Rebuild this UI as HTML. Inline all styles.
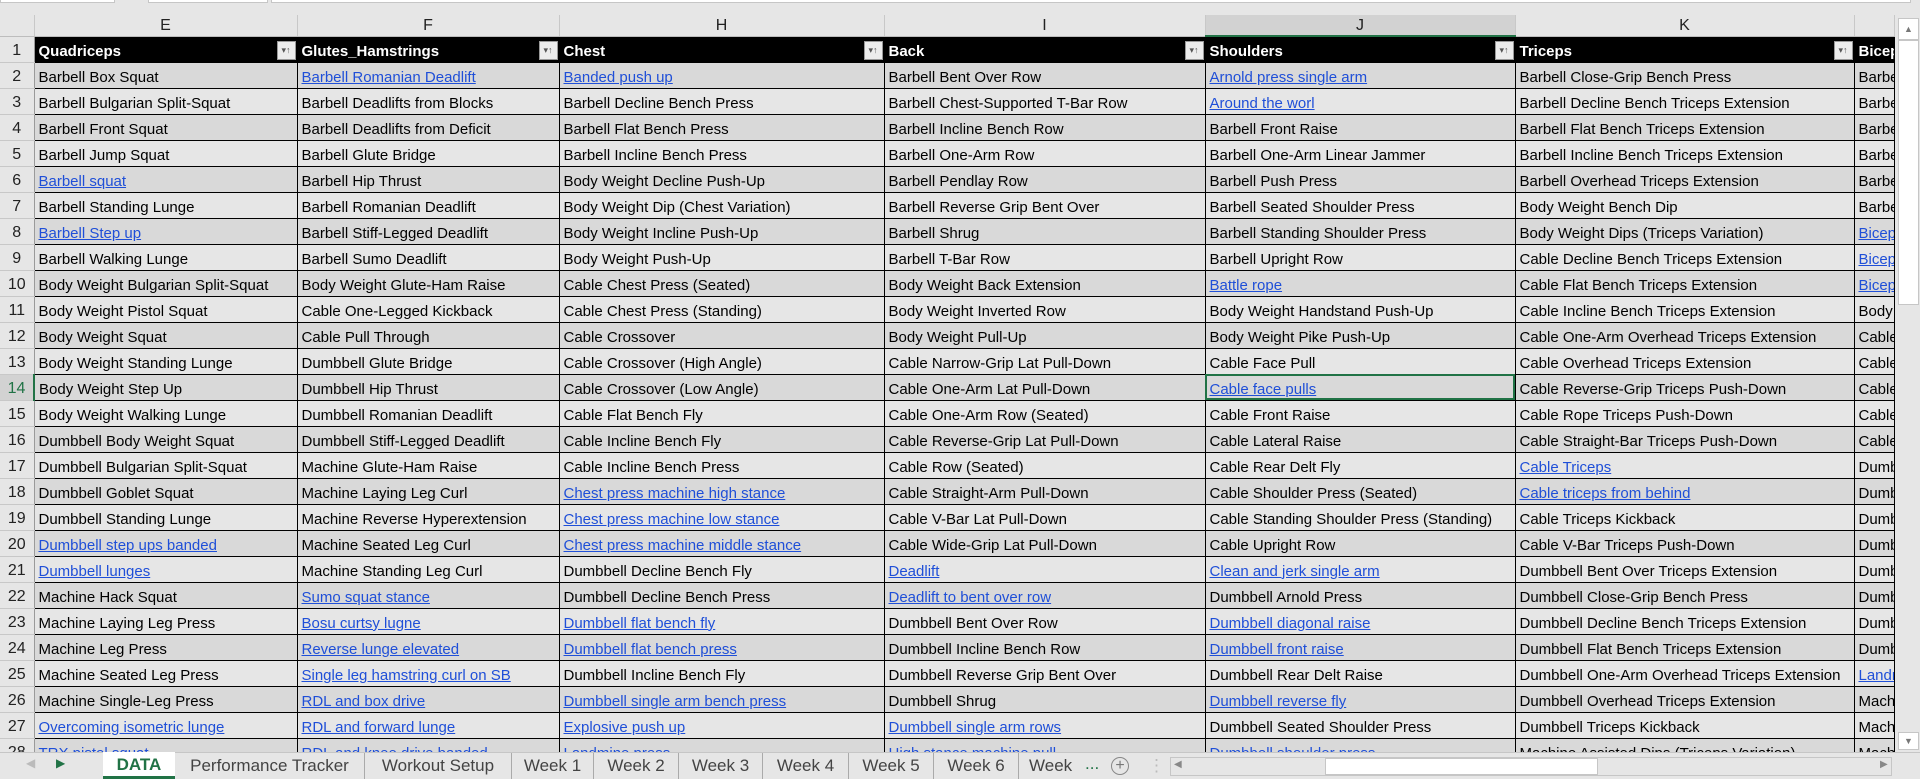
<!DOCTYPE html>
<html><head><meta charset="utf-8"><style>
*{margin:0;padding:0;box-sizing:border-box}
body{width:1920px;height:779px;overflow:hidden;background:#e6e6e6;font-family:"Liberation Sans",Arial,sans-serif;position:relative}
.top{position:absolute;left:0;top:0;width:1920px;height:15px;background:#e6e6e6}
.top div{position:absolute;top:0;height:3px;background:#fff;border:1px solid #c6c6c6;border-top:none}
table{position:absolute;left:0;top:15px;border-collapse:collapse;table-layout:fixed;width:1894px;font-size:15px}
td,th{overflow:hidden;white-space:nowrap;height:26px;border:1px solid #000;padding:4px 0 0 4px;text-align:left;font-weight:normal;color:#000;vertical-align:middle}
tr.ch th{height:21px;background:#e6e6e6;border:none;border-right:1px solid #c8c8c8;border-bottom:1px solid #bdbdbd;text-align:center;font-size:16px;color:#222;padding:2px 0 0 0}
tr.ch th.sel{background:#d2d2d2;border-bottom:2px solid #217346}
th.rn{background:#e6e6e6;border:none;border-right:1px solid #9a9a9a;border-bottom:1px solid #c8c8c8;text-align:center;padding:4px 0 0 0;font-size:16px;color:#222}
th.rn.s{background:#d2d2d2;color:#217346;border-right:2px solid #217346}
tr.h td{background:#000;color:#fff;font-weight:bold;position:relative}
.f{position:absolute;right:1px;top:4px;width:19px;height:19px;background:#ececec;border:1px solid #999;color:#555;font-size:9px;line-height:17px;text-align:center;font-weight:normal}
tr.g td{background:#d9d9d9}
a{color:#1f4fd8;text-decoration:underline}
td.sc{outline:2px solid #217346;outline-offset:-2px}
.vs{position:absolute;left:1897px;top:15px;width:23px;height:737px;background:#e6e6e6}
.tabs{position:absolute;left:0;top:752px;width:1920px;height:27px;background:#e6e6e6;border-top:1px solid #c6c6c6;font-size:17px;color:#444}
.tab{position:absolute;top:0;height:26px;line-height:25px;text-align:center;border-right:1px solid #aaa}
.tab.a{background:#fff;color:#217346;font-weight:bold;border-bottom:3px solid #217346;border-right:none;top:-1px;height:27px}
</style></head><body>
<div class="top"><div style="left:0;width:115px"></div><div style="left:148px;width:120px"></div><div style="left:271px;width:1640px"></div></div>
<table>
<colgroup><col style="width:34px"><col style="width:263px"><col style="width:262px"><col style="width:325px"><col style="width:321px"><col style="width:310px"><col style="width:339px"><col style="width:40px"></colgroup>
<tr class="ch"><th style="background:#e6e6e6"></th><th>E</th><th>F</th><th>H</th><th>I</th><th class="sel">J</th><th>K</th><th></th></tr>
<tr class="h"><th class="rn">1</th><td>Quadriceps<span class="f">▾↑</span></td><td>Glutes_Hamstrings<span class="f">▾↑</span></td><td>Chest<span class="f">▾↑</span></td><td>Back<span class="f">▾↑</span></td><td>Shoulders<span class="f">▾↑</span></td><td>Triceps<span class="f">▾↑</span></td><td>Biceps</td></tr>
<tr class="g"><th class="rn">2</th><td>Barbell Box Squat</td><td><a>Barbell Romanian Deadlift</a></td><td><a>Banded push up</a></td><td>Barbell Bent Over Row</td><td><a>Arnold press single arm</a></td><td>Barbell Close-Grip Bench Press</td><td>Barbell</td></tr>
<tr><th class="rn">3</th><td>Barbell Bulgarian Split-Squat</td><td>Barbell Deadlifts from Blocks</td><td>Barbell Decline Bench Press</td><td>Barbell Chest-Supported T-Bar Row</td><td><a>Around the worl</a></td><td>Barbell Decline Bench Triceps Extension</td><td>Barbell</td></tr>
<tr class="g"><th class="rn">4</th><td>Barbell Front Squat</td><td>Barbell Deadlifts from Deficit</td><td>Barbell Flat Bench Press</td><td>Barbell Incline Bench Row</td><td>Barbell Front Raise</td><td>Barbell Flat Bench Triceps Extension</td><td>Barbell</td></tr>
<tr><th class="rn">5</th><td>Barbell Jump Squat</td><td>Barbell Glute Bridge</td><td>Barbell Incline Bench Press</td><td>Barbell One-Arm Row</td><td>Barbell One-Arm Linear Jammer</td><td>Barbell Incline Bench Triceps Extension</td><td>Barbell</td></tr>
<tr class="g"><th class="rn">6</th><td><a>Barbell squat</a></td><td>Barbell Hip Thrust</td><td>Body Weight Decline Push-Up</td><td>Barbell Pendlay Row</td><td>Barbell Push Press</td><td>Barbell Overhead Triceps Extension</td><td>Barbell</td></tr>
<tr><th class="rn">7</th><td>Barbell Standing Lunge</td><td>Barbell Romanian Deadlift</td><td>Body Weight Dip (Chest Variation)</td><td>Barbell Reverse Grip Bent Over</td><td>Barbell Seated Shoulder Press</td><td>Body Weight Bench Dip</td><td>Barbell</td></tr>
<tr class="g"><th class="rn">8</th><td><a>Barbell Step up</a></td><td>Barbell Stiff-Legged Deadlift</td><td>Body Weight Incline Push-Up</td><td>Barbell Shrug</td><td>Barbell Standing Shoulder Press</td><td>Body Weight Dips (Triceps Variation)</td><td><a>Biceps</a></td></tr>
<tr><th class="rn">9</th><td>Barbell Walking Lunge</td><td>Barbell Sumo Deadlift</td><td>Body Weight Push-Up</td><td>Barbell T-Bar Row</td><td>Barbell Upright Row</td><td>Cable Decline Bench Triceps Extension</td><td><a>Biceps</a></td></tr>
<tr class="g"><th class="rn">10</th><td>Body Weight Bulgarian Split-Squat</td><td>Body Weight Glute-Ham Raise</td><td>Cable Chest Press (Seated)</td><td>Body Weight Back Extension</td><td><a>Battle rope</a></td><td>Cable Flat Bench Triceps Extension</td><td><a>Biceps</a></td></tr>
<tr><th class="rn">11</th><td>Body Weight Pistol Squat</td><td>Cable One-Legged Kickback</td><td>Cable Chest Press (Standing)</td><td>Body Weight Inverted Row</td><td>Body Weight Handstand Push-Up</td><td>Cable Incline Bench Triceps Extension</td><td>Body</td></tr>
<tr class="g"><th class="rn">12</th><td>Body Weight Squat</td><td>Cable Pull Through</td><td>Cable Crossover</td><td>Body Weight Pull-Up</td><td>Body Weight Pike Push-Up</td><td>Cable One-Arm Overhead Triceps Extension</td><td>Cable</td></tr>
<tr><th class="rn">13</th><td>Body Weight Standing Lunge</td><td>Dumbbell Glute Bridge</td><td>Cable Crossover (High Angle)</td><td>Cable Narrow-Grip Lat Pull-Down</td><td>Cable Face Pull</td><td>Cable Overhead Triceps Extension</td><td>Cable</td></tr>
<tr class="g"><th class="rn s">14</th><td>Body Weight Step Up</td><td>Dumbbell Hip Thrust</td><td>Cable Crossover (Low Angle)</td><td>Cable One-Arm Lat Pull-Down</td><td class="sc"><a>Cable face pulls</a></td><td>Cable Reverse-Grip Triceps Push-Down</td><td>Cable</td></tr>
<tr><th class="rn">15</th><td>Body Weight Walking Lunge</td><td>Dumbbell Romanian Deadlift</td><td>Cable Flat Bench Fly</td><td>Cable One-Arm Row (Seated)</td><td>Cable Front Raise</td><td>Cable Rope Triceps Push-Down</td><td>Cable</td></tr>
<tr class="g"><th class="rn">16</th><td>Dumbbell Body Weight Squat</td><td>Dumbbell Stiff-Legged Deadlift</td><td>Cable Incline Bench Fly</td><td>Cable Reverse-Grip Lat Pull-Down</td><td>Cable Lateral Raise</td><td>Cable Straight-Bar Triceps Push-Down</td><td>Cable</td></tr>
<tr><th class="rn">17</th><td>Dumbbell Bulgarian Split-Squat</td><td>Machine Glute-Ham Raise</td><td>Cable Incline Bench Press</td><td>Cable Row (Seated)</td><td>Cable Rear Delt Fly</td><td><a>Cable Triceps</a></td><td>Dumbbell</td></tr>
<tr class="g"><th class="rn">18</th><td>Dumbbell Goblet Squat</td><td>Machine Laying Leg Curl</td><td><a>Chest press machine high stance</a></td><td>Cable Straight-Arm Pull-Down</td><td>Cable Shoulder Press (Seated)</td><td><a>Cable triceps from behind</a></td><td>Dumbbell</td></tr>
<tr><th class="rn">19</th><td>Dumbbell Standing Lunge</td><td>Machine Reverse Hyperextension</td><td><a>Chest press machine low stance</a></td><td>Cable V-Bar Lat Pull-Down</td><td>Cable Standing Shoulder Press (Standing)</td><td>Cable Triceps Kickback</td><td>Dumbbell</td></tr>
<tr class="g"><th class="rn">20</th><td><a>Dumbbell step ups banded</a></td><td>Machine Seated Leg Curl</td><td><a>Chest press machine middle stance</a></td><td>Cable Wide-Grip Lat Pull-Down</td><td>Cable Upright Row</td><td>Cable V-Bar Triceps Push-Down</td><td>Dumbbell</td></tr>
<tr><th class="rn">21</th><td><a>Dumbbell lunges</a></td><td>Machine Standing Leg Curl</td><td>Dumbbell Decline Bench Fly</td><td><a>Deadlift </a></td><td><a>Clean and jerk single arm</a></td><td>Dumbbell Bent Over Triceps Extension</td><td>Dumbbell</td></tr>
<tr class="g"><th class="rn">22</th><td>Machine Hack Squat</td><td><a>Sumo squat stance</a></td><td>Dumbbell Decline Bench Press</td><td><a>Deadlift to bent over row</a></td><td>Dumbbell Arnold Press</td><td>Dumbbell Close-Grip Bench Press</td><td>Dumbbell</td></tr>
<tr><th class="rn">23</th><td>Machine Laying Leg Press</td><td><a>Bosu curtsy lugne</a></td><td><a>Dumbbell flat bench fly</a></td><td>Dumbbell Bent Over Row</td><td><a>Dumbbell diagonal raise</a></td><td>Dumbbell Decline Bench Triceps Extension</td><td>Dumbbell</td></tr>
<tr class="g"><th class="rn">24</th><td>Machine Leg Press</td><td><a>Reverse lunge elevated</a></td><td><a>Dumbbell flat bench press</a></td><td>Dumbbell Incline Bench Row</td><td><a>Dumbbell front raise</a></td><td>Dumbbell Flat Bench Triceps Extension</td><td>Dumbbell</td></tr>
<tr><th class="rn">25</th><td>Machine Seated Leg Press</td><td><a>Single leg hamstring curl on SB</a></td><td>Dumbbell Incline Bench Fly</td><td>Dumbbell Reverse Grip Bent Over</td><td>Dumbbell Rear Delt Raise</td><td>Dumbbell One-Arm Overhead Triceps Extension</td><td><a>Landmine</a></td></tr>
<tr class="g"><th class="rn">26</th><td>Machine Single-Leg Press</td><td><a>RDL and box drive</a></td><td><a>Dumbbell single arm bench press</a></td><td>Dumbbell Shrug</td><td><a>Dumbbell reverse fly</a></td><td>Dumbbell Overhead Triceps Extension</td><td>Machine</td></tr>
<tr><th class="rn">27</th><td><a>Overcoming isometric lunge</a></td><td><a>RDL and forward lunge</a></td><td><a>Explosive push up</a></td><td><a>Dumbbell single arm rows</a></td><td>Dumbbell Seated Shoulder Press</td><td>Dumbbell Triceps Kickback</td><td>Machine</td></tr>
<tr class="g"><th class="rn">28</th><td><a>TRX pistol squat</a></td><td><a>RDL and knee drive banded</a></td><td><a>Landmine press</a></td><td><a>High stance machine pull</a></td><td><a>Dumbbell shoulder press</a></td><td>Machine Assisted Dips (Triceps Variation)</td><td>Machine</td></tr>
</table>
<div class="vs">
<div style="position:absolute;left:1px;top:3px;width:21px;height:22px;background:#fff;border:1px solid #c6c6c6;font-size:9px;color:#777;text-align:center;line-height:20px">▲</div>
<div style="position:absolute;left:1px;top:25px;width:21px;height:265px;background:#fff;border:1px solid #c6c6c6"></div>
<div style="position:absolute;left:1px;top:717px;width:21px;height:18px;background:#fff;border:1px solid #c6c6c6;font-size:9px;color:#777;text-align:center;line-height:16px">▼</div>
</div>
<div class="tabs">
<span style="position:absolute;left:26px;top:3px;color:#bbb;font-size:12px">◀</span>
<span style="position:absolute;left:56px;top:3px;color:#217346;font-size:12px">▶</span>
<div class="tab a" style="left:103px;width:72px">DATA</div>
<div class="tab" style="left:175px;width:190px">Performance Tracker</div>
<div class="tab" style="left:365px;width:147px">Workout Setup</div>
<div class="tab" style="left:512px;width:82px">Week 1</div>
<div class="tab" style="left:594px;width:85px">Week 2</div>
<div class="tab" style="left:679px;width:84px">Week 3</div>
<div class="tab" style="left:763px;width:86px">Week 4</div>
<div class="tab" style="left:849px;width:85px">Week 5</div>
<div class="tab" style="left:934px;width:85px">Week 6</div>
<div class="tab" style="left:1019px;width:66px;overflow:hidden;text-align:left;padding-left:10px;border:none">Week 7</div>
<span style="position:absolute;left:1085px;top:1px;color:#217346">...</span>
<span style="position:absolute;left:1111px;top:4px;width:18px;height:18px;border:1px solid #888;border-radius:50%;text-align:center;line-height:15px;font-size:16px;color:#777">+</span>
<span style="position:absolute;left:1148px;top:3px;color:#bbb">⋮</span>
<div style="position:absolute;left:1170px;top:4px;width:722px;height:19px;background:#e6e6e6;border:1px solid #c6c6c6"></div>
<span style="position:absolute;left:1174px;top:6px;color:#888;font-size:10px">◀</span>
<div style="position:absolute;left:1325px;top:5px;width:273px;height:17px;background:#fff;border:1px solid #c6c6c6"></div>
<span style="position:absolute;left:1880px;top:6px;color:#888;font-size:10px">▶</span>
</div>
</body></html>
